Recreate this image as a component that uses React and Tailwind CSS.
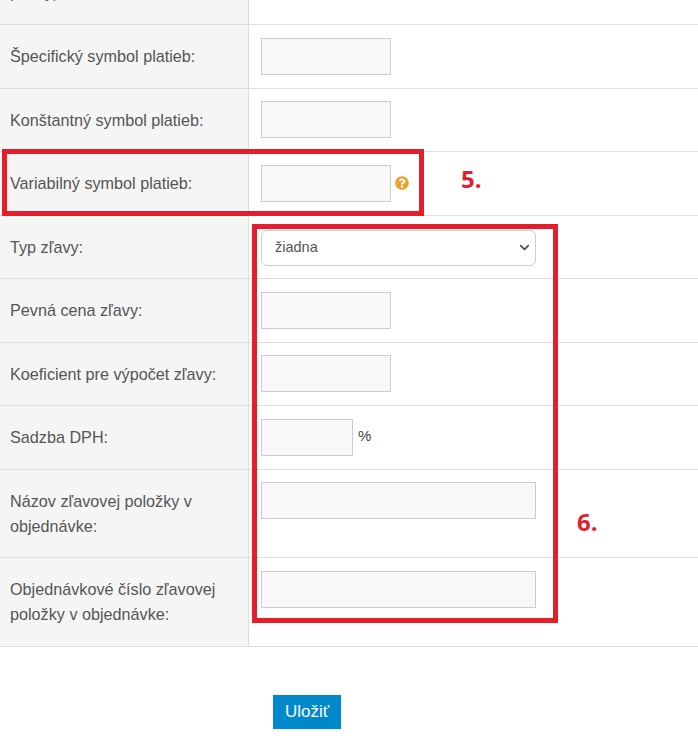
import React from 'react'
import { FaQuestionCircle } from 'react-icons/fa'
import { ChevronDown } from 'lucide-react'

const inputCls = 'h-[37px] border border-[#ccc] bg-[#f8f8f8] outline-none block'

const Row = ({ h, pt = 'pt-[13px]', label, children }) => (
  <div className={`flex border-b border-[#ddd] ${h}`}>
    <div className="w-[249px] shrink-0 bg-[#f5f5f5] border-r border-[#ddd] pl-[10px] pr-2 text-[16.2px] leading-[25px] text-[#555]">
      {label}
    </div>
    <div className={`flex-1 pl-3 ${pt}`}>{children}</div>
  </div>
)

const OneLine = ({ text }) => <div className="pt-[19px]">{text}</div>
const TwoLines = ({ a, b }) => (
  <div className="pt-[19px]">
    {a}
    <br />
    {b}
  </div>
)

export default function App() {
  return (
    <div className="relative w-[698px] h-[743px] overflow-hidden bg-white font-['Liberation_Sans',Arial,sans-serif]">
      <div className="flex h-[25px] border-b border-[#ddd]">
        <div className="w-[249px] shrink-0 bg-[#f5f5f5] border-r border-[#ddd] pl-[10px] text-[16.2px] leading-[25px] text-[#555] overflow-hidden">
          <div className="-mt-[20px]">platby),</div>
        </div>
      </div>

      <Row h="h-[64px]" label={<OneLine text="Špecifický symbol platieb:" />}>
        <input className={`${inputCls} w-[130px]`} />
      </Row>
      <Row h="h-[63px]" pt="pt-[12px]" label={<OneLine text="Konštantný symbol platieb:" />}>
        <input className={`${inputCls} w-[130px]`} />
      </Row>
      <Row h="h-[64px]" label={<OneLine text="Variabilný symbol platieb:" />}>
        <div className="flex items-center gap-1">
          <input className={`${inputCls} w-[130px]`} />
          <FaQuestionCircle className="text-[14px] text-[#f0a02c] -mt-[2px]" />
        </div>
      </Row>
      <Row h="h-[63px]" label={<OneLine text="Typ zľavy:" />}>
        <div className="relative w-[275px] mt-px">
          <select className="w-full h-[36px] appearance-none rounded-md border border-[#ccc] bg-white pl-[13px] text-[14.5px] text-[#555] outline-none">
            <option>žiadna</option>
          </select>
          <ChevronDown className="absolute right-[4px] top-[10px] w-[15px] h-[15px] text-[#444]" strokeWidth={2.5} />
        </div>
      </Row>
      <Row h="h-[64px]" label={<OneLine text="Pevná cena zľavy:" />}>
        <input className={`${inputCls} w-[130px]`} />
      </Row>
      <Row h="h-[63px]" pt="pt-[12px]" label={<OneLine text="Koeficient pre výpočet zľavy:" />}>
        <input className={`${inputCls} w-[130px]`} />
      </Row>
      <Row h="h-[64px]" label={<OneLine text="Sadzba DPH:" />}>
        <div className="flex gap-[5px]">
          <input className={`${inputCls} w-[92px]`} />
          <span className="pt-[7px] text-[15px] leading-[20px] text-[#444]">%</span>
        </div>
      </Row>
      <Row h="h-[88px]" pt="pt-[12px]" label={<TwoLines a="Názov zľavovej položky v" b="objednávke:" />}>
        <input className={`${inputCls} w-[275px]`} />
      </Row>
      <Row h="h-[89px]" label={<TwoLines a="Objednávkové číslo zľavovej" b="položky v objednávke:" />}>
        <input className={`${inputCls} w-[275px]`} />
      </Row>

      <div className="pl-[273px] pt-[48px]">
        <button className="w-[68px] h-[34px] bg-[#0088cc] text-white text-[17px]">Uložiť</button>
      </div>

      {/* red annotation frames */}
      <div className="absolute left-[2px] top-[149px] w-[422px] h-[67px] border-[5px] border-[#e41e2b]" />
      <div className="absolute left-[252px] top-[224px] w-[306px] h-[399px] border-[5px] border-[#e41e2b]" />
      <div className="absolute left-[461px] top-[164px] text-[24px] leading-[30px] font-bold text-[#e41e2b] font-['Open_Sans',sans-serif]">5.</div>
      <div className="absolute left-[577px] top-[507px] text-[24px] leading-[30px] font-bold text-[#e41e2b] font-['Open_Sans',sans-serif]">6.</div>
    </div>
  )
}
